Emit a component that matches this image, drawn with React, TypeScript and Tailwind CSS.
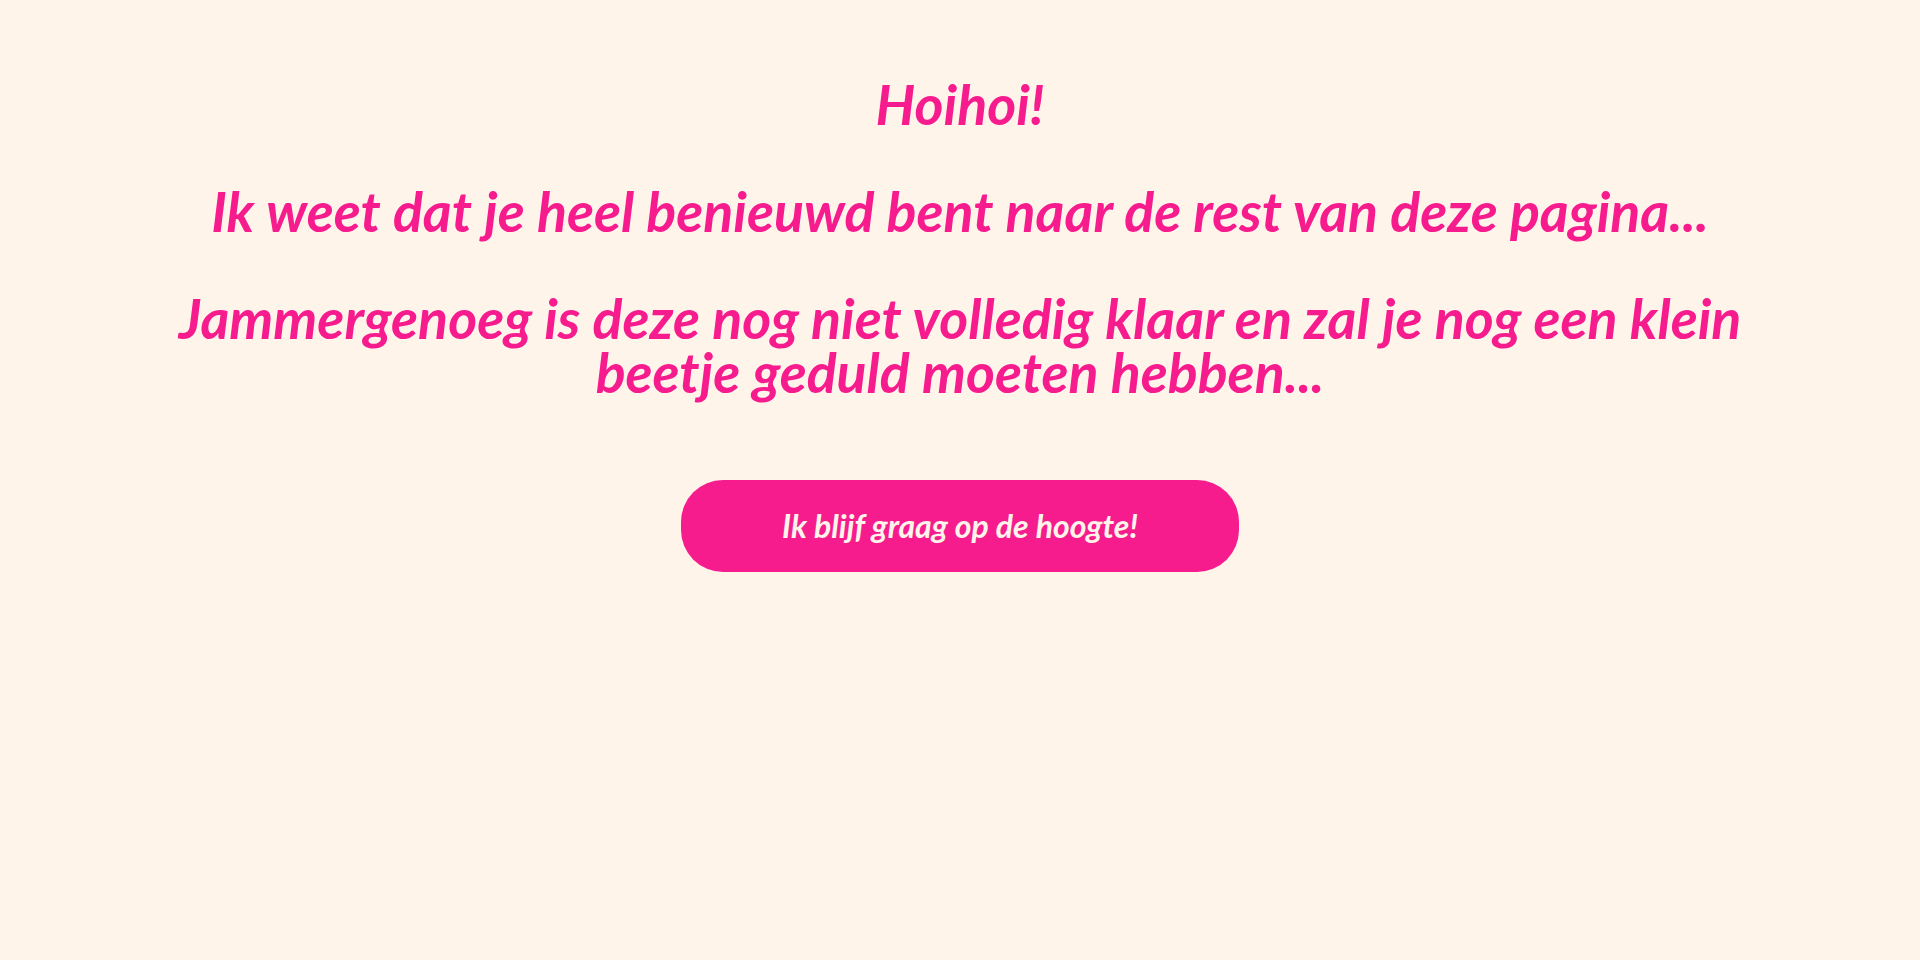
export default function App() {
  return (
    <div className="min-h-screen w-full bg-[#fff4ea] font-['Lato',sans-serif]">
      <div className="flex flex-col items-center px-[140px] pt-[77px] text-center">
        <h1 className="text-[55.5px] font-bold italic leading-[53.5px] text-[#f71c8e]">
          Hoihoi!
          <br />
          <br />
          Ik weet dat je heel benieuwd bent naar de rest van deze pagina...
          <br />
          <br />
          Jammergenoeg is deze nog niet volledig klaar en zal je nog een klein beetje geduld moeten hebben...
        </h1>
        <button className="mt-[82px] h-[92px] w-[558px] rounded-[42px] bg-[#f71c8e] text-[32px] font-bold italic text-[#fff4ea]">
          Ik blijf graag op de hoogte!
        </button>
      </div>
    </div>
  )
}
